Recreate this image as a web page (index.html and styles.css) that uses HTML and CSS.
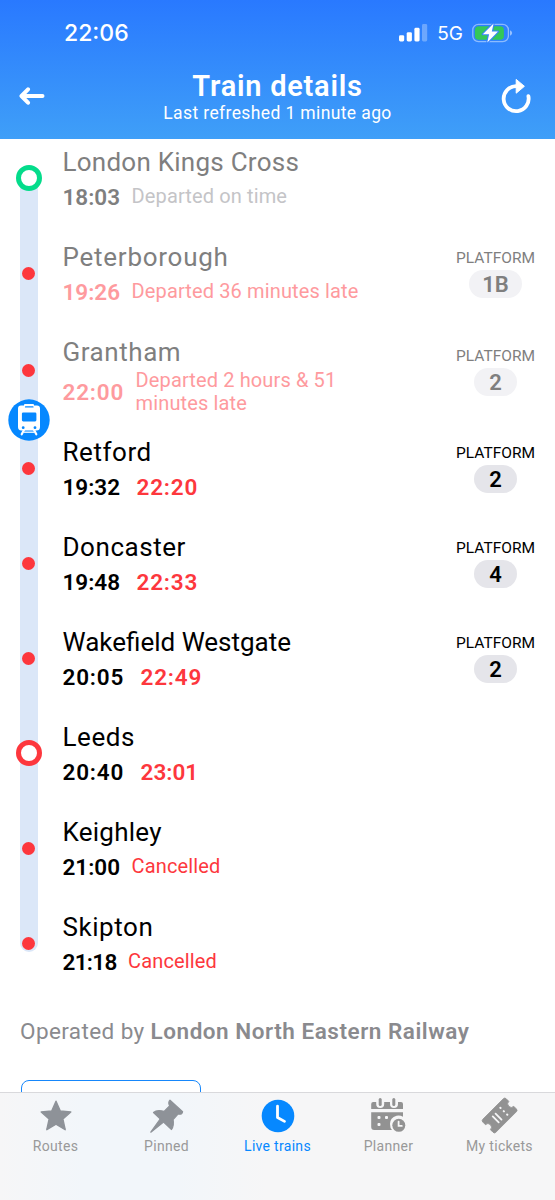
FILE: index.html
```html
<!DOCTYPE html>
<html lang="en">
<head>
<meta charset="utf-8">
<title>Train details</title>
<link rel="stylesheet" href="styles.css">
</head>
<body>
<div class="app">
  <header class="header">
    <div class="status">
      <span class="clock">22:06</span>
      <div class="indicators">
        <svg class="signal" width="30" height="20" viewBox="0 0 30 20" fill="#fff"><rect x="0" y="12.2" width="5.2" height="6.3" rx="1.4"/><rect x="7.7" y="9.2" width="5.2" height="9.3" rx="1.4"/><rect x="15.4" y="4.8" width="5.2" height="13.7" rx="1.4"/><rect x="23" y="1" width="5.2" height="17.5" rx="1.4" opacity=".3"/></svg>
        <span class="network">5G</span>
        <svg class="battery" width="42" height="20" viewBox="0 0 42 20"><rect x=".8" y="1.3" width="35.6" height="17.4" rx="5.6" fill="none" stroke="#fff" stroke-opacity=".45" stroke-width="1.3"/><path d="M38 7.2q2.2 1 2.2 2.8T38 12.8z" fill="#fff" opacity=".5"/><rect x="2.900" y="3.300" width="29" height="13.400" rx="3.800" fill="#34c759"/><path d="M21.600.600 10.800 11.200h6.300l-1.800 8.200L26 8.600h-6.200z" fill="#fff" stroke="#3783fb" stroke-width="2.200" paint-order="stroke" stroke-linejoin="round"/></svg>
      </div>
    </div>
    <div class="nav">
      <svg class="back" width="26" height="18" viewBox="0 0 26 18" fill="none" stroke="#fff" stroke-width="4" stroke-linecap="round" stroke-linejoin="round"><path d="M23.500 9H3M9 2.300 2.500 9l6.500 6.700"/></svg>
      <div class="titles">
        <h1 class="title">Train details</h1>
        <p class="subtitle">Last refreshed 1 minute ago</p>
      </div>
      <svg class="refresh" width="30" height="36" viewBox="0 0 30 36"><path d="M15 8.200A12.500 12.500 0 1 0 27.400 18.200" fill="none" stroke="#fff" stroke-width="3.800" stroke-linecap="round"/><path d="M15.200 1.400 23.400 8.300 15.200 15.200z" fill="#fff" stroke="#fff" stroke-width="1" stroke-linejoin="round"/></svg>
    </div>
  </header>

  <main class="content">
    <ol class="stops">
      <li class="stop past first">
        <div class="rail"><span class="ring green"></span></div>
        <div class="info"><h2 class="name snug">London Kings Cross</h2><div class="times"><b class="time">18:03</b><span class="note muted">Departed on time</span></div></div>
      </li>
      <li class="stop past">
        <div class="rail"><span class="dot"></span></div>
        <div class="info"><h2 class="name loose">Peterborough</h2><div class="times late"><b class="time">19:26</b><span class="note">Departed 36 minutes late</span></div></div>
        <div class="platform"><span class="label">PLATFORM</span><b class="pill">1B</b></div>
      </li>
      <li class="stop past">
        <div class="rail"><span class="dot"></span>
          <svg class="train" width="42" height="42" viewBox="0 0 42 42"><circle cx="21" cy="21" r="20.700" fill="#0688ff"/><path d="M13.700 35.300 16.200 30.500M28.300 35.300 25.800 30.500" stroke="#fff" stroke-width="2.200" stroke-linecap="round"/><path d="M15.500 33.200h11" stroke="#fff" stroke-width="1.300"/><path d="M13 6.600h3V6q0-.9 1-.9h8q1 0 1 .9v.6h3q3 0 3 3v18.300q0 3.500-3.500 3.500h-15Q10 31.500 10 28V9.600q0-3 3-3z" fill="#fff"/><path d="M17.500 7.900h7.500" stroke="#0688ff" stroke-width="1.200" stroke-linecap="round"/><rect x="13.900" y="13.400" width="14.500" height="9" rx="1.300" fill="#0688ff"/><circle cx="15.200" cy="28.700" r="1.400" fill="#0688ff"/><circle cx="27" cy="28.700" r="1.400" fill="#0688ff"/></svg>
        </div>
        <div class="info"><h2 class="name">Grantham</h2><div class="times late"><b class="time wide">22:00</b><span class="note wrap">Departed 2 hours &amp; 51 minutes late</span></div></div>
        <div class="platform"><span class="label">PLATFORM</span><b class="pill">2</b></div>
      </li>
      <li class="stop">
        <div class="rail"><span class="dot"></span></div>
        <div class="info"><h2 class="name">Retford</h2><div class="times"><b class="time">19:32</b><b class="time wide new">22:20</b></div></div>
        <div class="platform"><span class="label">PLATFORM</span><b class="pill">2</b></div>
      </li>
      <li class="stop">
        <div class="rail"><span class="dot"></span></div>
        <div class="info"><h2 class="name">Doncaster</h2><div class="times"><b class="time">19:48</b><b class="time wide new">22:33</b></div></div>
        <div class="platform"><span class="label">PLATFORM</span><b class="pill">4</b></div>
      </li>
      <li class="stop">
        <div class="rail"><span class="dot"></span></div>
        <div class="info"><h2 class="name tight">Wakefield Westgate</h2><div class="times"><b class="time wide">20:05</b><b class="time wide new">22:49</b></div></div>
        <div class="platform"><span class="label">PLATFORM</span><b class="pill">2</b></div>
      </li>
      <li class="stop">
        <div class="rail"><span class="ring red"></span></div>
        <div class="info"><h2 class="name">Leeds</h2><div class="times"><b class="time wide">20:40</b><b class="time new">23:01</b></div></div>
      </li>
      <li class="stop">
        <div class="rail"><span class="dot"></span></div>
        <div class="info"><h2 class="name snug">Keighley</h2><div class="times"><b class="time">21:00</b><span class="note cancelled">Cancelled</span></div></div>
      </li>
      <li class="stop last">
        <div class="rail"><span class="dot"></span></div>
        <div class="info"><h2 class="name">Skipton</h2><div class="times"><b class="time narrow">21:18</b><span class="note cancelled">Cancelled</span></div></div>
      </li>
    </ol>
    <p class="operator">Operated by <b>London North Eastern Railway</b></p>
    <div class="action"></div>
  </main>

  <nav class="tabs">
    <a class="tab"><svg width="38" height="38" viewBox="0 0 38 38"><path d="M19 4.200 23.300 14l10.500 1-7.900 7.100 2.300 10.600L19 27.200l-9.200 5.500 2.300-10.600L4.200 15l10.500-1z" fill="#8e9298" stroke="#8e9298" stroke-width="1.400" stroke-linejoin="round"/></svg><span>Routes</span></a>
    <a class="tab"><svg width="38" height="38" viewBox="0 0 38 38" fill="#8e9298" stroke="#8e9298" stroke-width="1.200" stroke-linejoin="round"><path d="M22 3.200 34.600 14.800q-.2 3-4.600 2.300l-4.900 5.400q1.100 5.700-1.600 10L5.500 15.500q3.300-3.200 10.600-1.200l5.500-5.500q-1.800-3.300.4-5.600z"/><path d="M12.500 21.500 2.800 35.200l13.100-10.400z"/></svg><span>Pinned</span></a>
    <a class="tab active"><svg width="38" height="38" viewBox="0 0 38 38"><circle cx="19" cy="19" r="16.300" fill="#0688ff"/><path d="M18.500 9.200v11.300l7 3.900" fill="none" stroke="#fff" stroke-width="2.800" stroke-linecap="round" stroke-linejoin="round"/></svg><span>Live trains</span></a>
    <a class="tab"><svg width="38" height="38" viewBox="0 0 38 38"><g fill="#929292"><path d="M1.200 12V7q0-2 2-2h3v2a4 4 0 0 0 8 0V5H20v2a4 4 0 0 0 8 0V5h3q2 0 2 2v5zM1.200 15.300H33v4.400q-3-1.700-6.500-1-6.500 1.700-6.500 8.400 0 4.200 2 6H4.200q-3 0-3-3z"/><rect x="8.700" y="1" width="3" height="8" rx="1.500"/><rect x="22.300" y="1" width="3" height="8" rx="1.500"/><circle cx="28.800" cy="28.300" r="6.500"/></g><g fill="#f6f6f7"><rect x="7.500" y="19" width="3" height="3" rx="1"/><rect x="15" y="19" width="3" height="3" rx="1"/><rect x="7.500" y="26" width="3" height="3" rx="1"/></g><path d="M28.600 24.600v4.300h3.200" fill="none" stroke="#f6f6f7" stroke-width="1.800" stroke-linecap="round"/></svg><span>Planner</span></a>
    <a class="tab"><svg width="38" height="38" viewBox="0 0 38 38"><g transform="translate(18.600 18.500) rotate(-45)"><path d="M-14.500-9.200h29q2 0 2 2v3.700a3.500 3.500 0 0 0 0 7v3.700q0 2-2 2h-29q-2 0-2-2V3.500a3.500 3.500 0 0 0 0-7v-3.700q0-2 2-2z" fill="#929292" stroke="#929292" stroke-width=".8" stroke-linejoin="round"/><path d="M-5.500-4.200v8.400M-1.500-4.200v8.400" stroke="#f6f6f7" stroke-width="1.800" stroke-linecap="round"/><path d="M6-5v.4M6-.2v.4M6 4.600v.4" stroke="#f6f6f7" stroke-width="2" stroke-linecap="round"/></g></svg><span>My tickets</span></a>
  </nav>
</div>
</body>
</html>
```
FILE: styles.css
```css
* { box-sizing: border-box; margin: 0; padding: 0; }
body { background: #fff; font-family: Roboto, "Liberation Sans", sans-serif; color: #000; }
.app { width: 555px; height: 1200px; display: grid; grid-template-rows: 138.5px 953.5px 108px; overflow: hidden; }
b { font-weight: 600; }

.header { background: linear-gradient(#2979ff, #3f9ff8); color: #fff; z-index: 1; display: flex; flex-direction: column; }
.status { height: 66px; display: flex; justify-content: space-between; align-items: center; padding: 0 41px 0 64px; }
.clock { font-family: Inter, sans-serif; font-size: 23px; font-weight: 500; }
.indicators { display: flex; align-items: center; }
.network { font-family: Inter, sans-serif; font-size: 19px; margin: 1px 9px 0 8px; }
.nav { display: grid; grid-template-columns: 50px 1fr 50px; padding: 0 19px; }
.back { margin-top: 21px; }
.refresh { margin: 12px 0 0 15px; }
.titles { text-align: center; }
.title { font-size: 29px; font-weight: 600; line-height: 34px; padding-top: 3px; letter-spacing: .75px; }
.subtitle { font-size: 17.5px; line-height: 20px; letter-spacing: .38px; }

.content { overflow: hidden; padding-left: 20px; }
.stops { list-style: none; margin-top: -8px; }
.stop { display: grid; grid-template-columns: 17.5px 1fr 80px; column-gap: 25px; min-height: 95px; padding-right: 19.5px; }
.rail { position: relative; display: flex; align-items: center; justify-content: center; background: #dbe7f8; }
.first .rail { background: linear-gradient(transparent 50%, #dbe7f8 50%); }
.last .rail { height: 56px; border-radius: 0 0 9px 9px; align-items: flex-end; padding-bottom: 2px; }
.dot { width: 13px; height: 13px; border-radius: 50%; background: #fd373d; }
.ring { flex: none; width: 26px; height: 26px; border-radius: 50%; border: 5px solid; background: #fff; }
.green { border-color: #04dc8b; }
.red { border-color: #fd373d; }
.train { position: absolute; left: -12.5px; bottom: -20.5px; z-index: 1; }
.info { padding: 15px 0 6px; }
.name { font-size: 26px; font-weight: 400; line-height: 32px; letter-spacing: .55px; margin-bottom: 1px; }
.snug { letter-spacing: .25px; }
.tight { letter-spacing: 0; }
.loose { letter-spacing: .75px; }
.times { display: flex; align-items: center; gap: 11.5px; min-height: 36px; }
.time { font-size: 22.5px; letter-spacing: 0; }
.wide { letter-spacing: .8px; }
.narrow { letter-spacing: -.7px; }
.new { color: #fd373d; margin-left: 5px; }
.note { font-size: 20px; line-height: 23px; letter-spacing: .13px; }
.wrap { width: 230px; }
.cancelled { color: #fd373d; }
.past { color: #7f7f7f; }
.late { color: #fe9a9e; }
.muted { color: #c4c4c7; }
.platform { display: flex; flex-direction: column; align-items: center; justify-content: center; gap: 2px; }
.label { font-size: 15.5px; line-height: 20px; }
.pill { height: 28px; min-width: 42.5px; padding: 0 13.5px; border-radius: 14px; background: #e5e5ea; font-size: 22px; line-height: 29px; text-align: center; }
.past .pill { background: #f2f2f5; }
.operator { margin-top: 26px; font-size: 22.5px; line-height: 28px; color: #8a8a8e; letter-spacing: .4px; }
.operator b { letter-spacing: .53px; }
.action { margin: 35px 0 0 1px; width: 180px; height: 44px; border: 1.4px solid #1687fb; border-radius: 8px; }

.tabs { display: grid; grid-template-columns: repeat(5, 111px); border-top: 1px solid #d9d9dc; background: linear-gradient(90deg, #f6f6f7, #f2f6fa 15%, #f2f6fa 32%, #f6f6f7 48%); }
.tab { display: flex; flex-direction: column; align-items: center; padding-top: 4px; font-size: 14px; line-height: 20px; color: #999; letter-spacing: .3px; }
.tab span { margin-top: 1px; }
.active { color: #0688ff; }
```
